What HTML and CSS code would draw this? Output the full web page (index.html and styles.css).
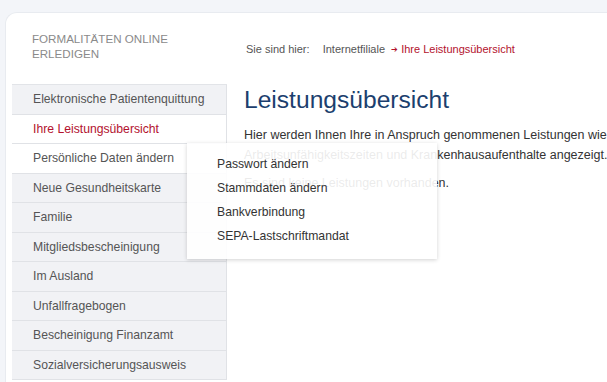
FILE: index.html
```html
<!DOCTYPE html>
<html lang="de">
<head>
  <meta charset="UTF-8" />
  <title>Leistungsübersicht</title>
  <link rel="stylesheet" href="styles.css">
</head>
<body>
  <div class="card">
    <aside class="side">
      <div class="side-title">FORMALITÄTEN ONLINE<br>ERLEDIGEN</div>
      <ul class="nav">
        <li>Elektronische Patientenquittung</li>
        <li class="active">Ihre Leistungsübersicht</li>
        <li class="open">Persönliche Daten ändern
          <ul class="sub">
            <li>Passwort ändern</li>
            <li>Stammdaten ändern</li>
            <li>Bankverbindung</li>
            <li>SEPA-Lastschriftmandat</li>
          </ul>
        </li>
        <li>Neue Gesundheitskarte</li>
        <li>Familie</li>
        <li>Mitgliedsbescheinigung</li>
        <li>Im Ausland</li>
        <li>Unfallfragebogen</li>
        <li>Bescheinigung Finanzamt</li>
        <li>Sozialversicherungsausweis</li>
      </ul>
    </aside>

    <main class="main">
      <div class="crumbs">
        <span class="crumb-label">Sie sind hier:</span>
        <span>Internetfiliale</span>
        <span class="crumb-current"><span class="arrow">&#10132;</span> Ihre Leistungsübersicht</span>
      </div>
      <h1>Leistungsübersicht</h1>
      <p>Hier werden Ihnen Ihre in Anspruch genommenen Leistungen wie<br>Arbeitsunfähigkeitszeiten und Krankenhausaufenthalte angezeigt.</p>
      <p>Es sind keine Leistungen vorhanden.</p>
    </main>
  </div>
</body>
</html>
```

FILE: styles.css
```css
body {
  margin: 0;
  background: #f3f5f9;
  font-family: "Liberation Sans", Arial, sans-serif;
  overflow: hidden;
  height: 382px;
}

.card {
  margin: 12px 0 0 5px;
  background: #fff;
  border-top: 1px solid #e8ebf0;
  border-left: 1px solid #e8ebf0;
  border-radius: 12px 0 0 0;
  display: flex;
  height: 380px;
}

.side {
  width: 215px;
  flex: none;
  padding: 17.5px 0 0 6px;
}

.side-title {
  color: #8a8a8a;
  font-size: 11.6px;
  line-height: 15px;
  padding-left: 20px;
  height: 53.5px;
}

.nav {
  list-style: none;
  margin: 0;
  padding: 0;
  border-top: 1px solid #e2e4e8;
}

.nav > li {
  position: relative;
  height: 28.55px;
  line-height: 28px;
  padding-left: 21px;
  font-size: 12.2px;
  color: #555;
  background: #f1f2f5;
  border-bottom: 1px solid #e0e2e6;
  border-right: 1px solid #e0e2e6;
}

.nav > li.active,
.nav > li.open {
  background: #fff;
}

.nav > li.active {
  color: #b3122e;
}

.sub {
  position: absolute;
  left: 175px;
  top: -1px;
  width: 220px;
  margin: 0;
  padding: 9px 0 11px 30px;
  list-style: none;
  line-height: 24px;
  background: rgba(255, 255, 255, 0.9);
  box-shadow: 0 1px 4px rgba(0, 0, 0, 0.18);
  z-index: 2;
}

.sub li {
  font-size: 12.2px;
  height: 24px;
  color: #333;
}

.main {
  flex: 1;
  padding: 0 0 0 17px;
  white-space: nowrap;
}

.crumbs {
  font-size: 11px;
  color: #555;
  margin: 29px 0 0 2px;
  line-height: 14px;
}

.crumb-label {
  margin-right: 7px;
}

.crumbs > span + span {
  margin-left: 3px;
}

.crumb-current {
  color: #b3122e;
}

.arrow {
  font-size: 8px;
  vertical-align: 1px;
}

h1 {
  margin: 28px 0 0 0;
  font-weight: normal;
  font-size: 24.6px;
  line-height: 30px;
  color: #1c3f6e;
}

p {
  margin: 10px 0 0;
  font-size: 12.5px;
  line-height: 20px;
  color: #333;
}

p + p {
  margin-top: 8px;
}
```
